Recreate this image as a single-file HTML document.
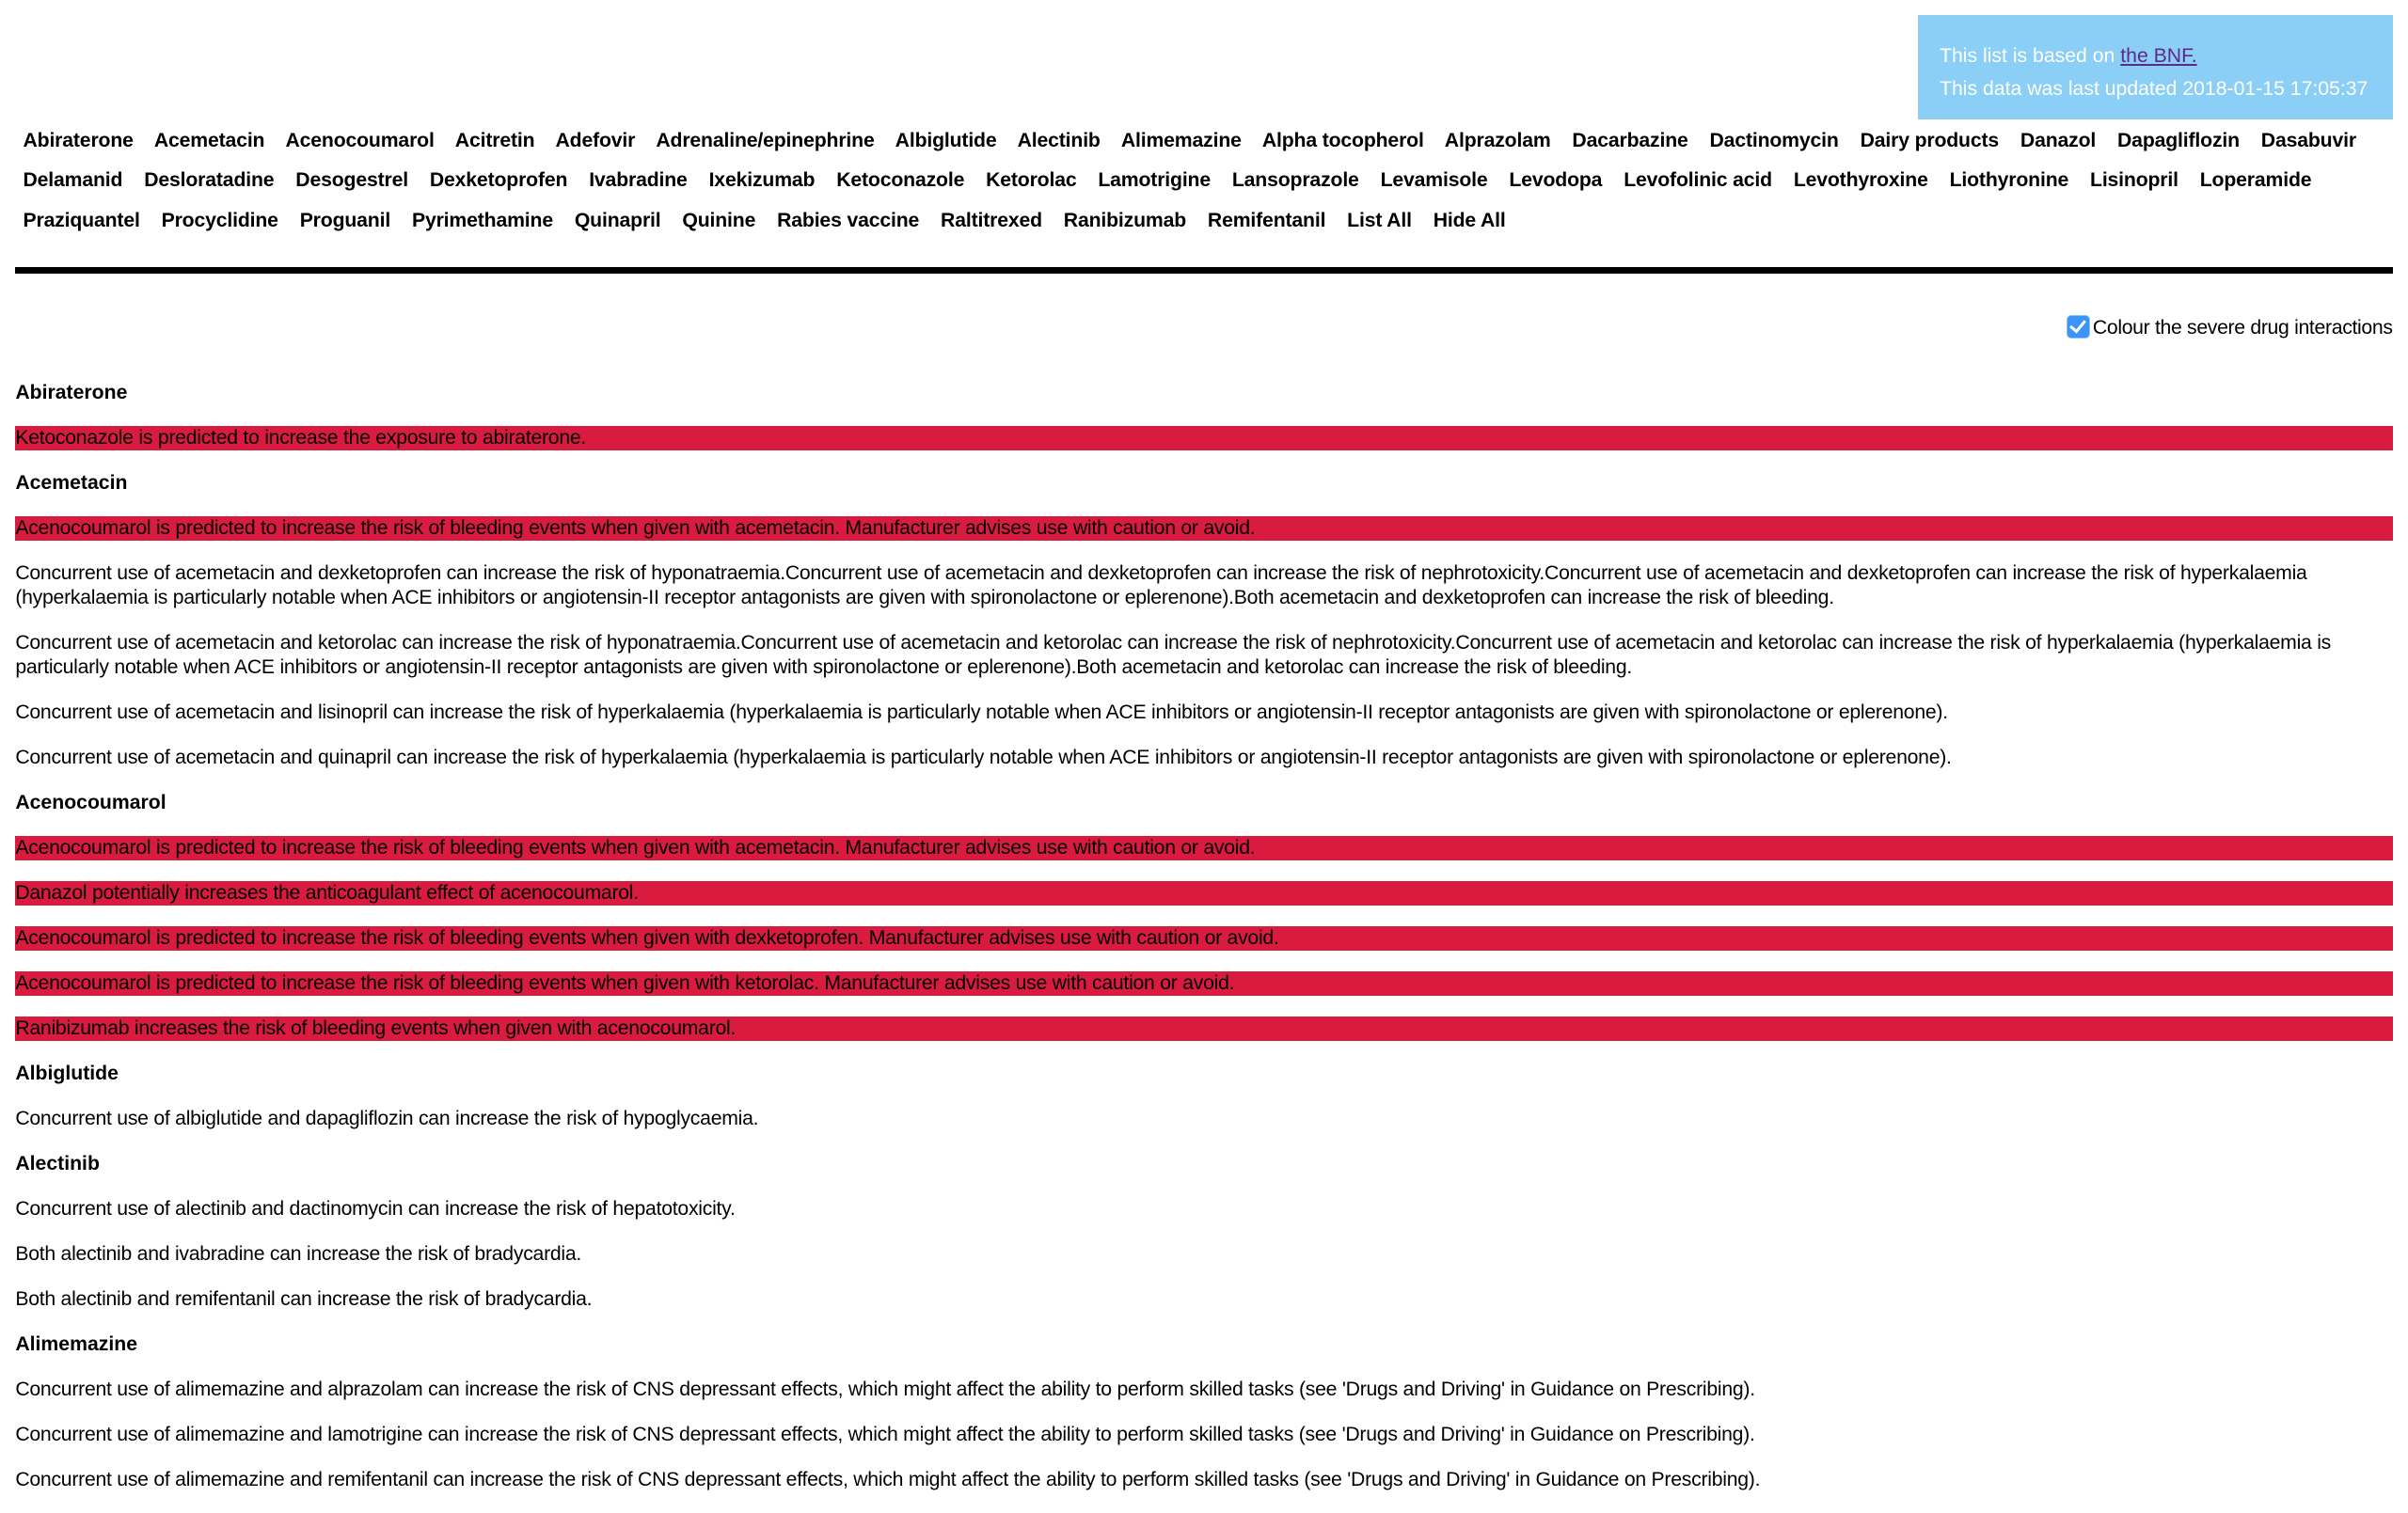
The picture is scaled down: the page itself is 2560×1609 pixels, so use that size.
<!DOCTYPE html>
<html><head><meta charset="utf-8">
<style>
html,body{margin:0;padding:0;background:#fff;}
body{width:1568px;height:980px;overflow:hidden;zoom:1.63265;font-family:"Liberation Sans",Arial,sans-serif;color:#000;position:relative;}
.box{position:absolute;left:1249px;top:10px;width:309px;height:68px;background:#8bcff7;color:#fff;font-size:13px;letter-spacing:0px;}
.box div{position:absolute;left:14px;white-space:nowrap;line-height:16px;}
.box a{color:#5b2a8e;text-decoration:underline;}
.nav{position:absolute;left:15px;top:79px;font-weight:bold;font-size:13px;line-height:26px;letter-spacing:-0.1px;}
.nav div{white-space:nowrap;word-spacing:0;}
.nav span{margin-right:10.5px;}
.bar{position:absolute;left:10px;top:174px;width:1548px;height:4px;background:#000;}
.chk{position:absolute;right:10px;top:205px;font-size:13px;line-height:16px;white-space:nowrap;letter-spacing:-0.2px;}
.cb{display:inline-block;width:14px;height:14px;background:#3d94f6;border:1px solid #8ec2fa;border-radius:3px;vertical-align:-3px;margin-right:2px;position:relative;}
.cb:after{content:"";position:absolute;left:4px;top:1px;width:4px;height:8px;border:solid #fff;border-width:0 2px 2px 0;transform:rotate(40deg);}
.main{position:absolute;left:10px;top:248px;width:1548px;font-size:13px;line-height:16px;}
.main p{margin:0 0 13.4px;white-space:nowrap;letter-spacing:-0.16px;}
.main h4{margin:0 0 13.4px;font-size:13px;font-weight:bold;letter-spacing:0px;}
.main p.r{background:#d91b3f;}
</style></head><body>
<div class="box">
<div style="top:19px">This list is based on <a>the BNF.</a></div>
<div style="top:40px">This data was last updated 2018-01-15 17:05:37</div>
</div>
<div class="nav">
<div><span>Abiraterone</span> <span>Acemetacin</span> <span>Acenocoumarol</span> <span>Acitretin</span> <span>Adefovir</span> <span>Adrenaline/epinephrine</span> <span>Albiglutide</span> <span>Alectinib</span> <span>Alimemazine</span> <span>Alpha tocopherol</span> <span>Alprazolam</span> <span>Dacarbazine</span> <span>Dactinomycin</span> <span>Dairy products</span> <span>Danazol</span> <span>Dapagliflozin</span> <span>Dasabuvir</span></div>
<div><span>Delamanid</span> <span>Desloratadine</span> <span>Desogestrel</span> <span>Dexketoprofen</span> <span>Ivabradine</span> <span>Ixekizumab</span> <span>Ketoconazole</span> <span>Ketorolac</span> <span>Lamotrigine</span> <span>Lansoprazole</span> <span>Levamisole</span> <span>Levodopa</span> <span>Levofolinic acid</span> <span>Levothyroxine</span> <span>Liothyronine</span> <span>Lisinopril</span> <span>Loperamide</span></div>
<div><span>Praziquantel</span> <span>Procyclidine</span> <span>Proguanil</span> <span>Pyrimethamine</span> <span>Quinapril</span> <span>Quinine</span> <span>Rabies vaccine</span> <span>Raltitrexed</span> <span>Ranibizumab</span> <span>Remifentanil</span> <span>List All</span> <span>Hide All</span></div>
</div>
<div class="bar"></div>
<div class="chk"><span class="cb"></span>Colour the severe drug interactions</div>
<div class="main">
<h4>Abiraterone</h4>
<p class="r">Ketoconazole is predicted to increase the exposure to abiraterone.</p>
<h4>Acemetacin</h4>
<p class="r">Acenocoumarol is predicted to increase the risk of bleeding events when given with acemetacin. Manufacturer advises use with caution or avoid.</p>
<p>Concurrent use of acemetacin and dexketoprofen can increase the risk of hyponatraemia.Concurrent use of acemetacin and dexketoprofen can increase the risk of nephrotoxicity.Concurrent use of acemetacin and dexketoprofen can increase the risk of hyperkalaemia<br>(hyperkalaemia is particularly notable when ACE inhibitors or angiotensin-II receptor antagonists are given with spironolactone or eplerenone).Both acemetacin and dexketoprofen can increase the risk of bleeding.</p>
<p>Concurrent use of acemetacin and ketorolac can increase the risk of hyponatraemia.Concurrent use of acemetacin and ketorolac can increase the risk of nephrotoxicity.Concurrent use of acemetacin and ketorolac can increase the risk of hyperkalaemia (hyperkalaemia is<br>particularly notable when ACE inhibitors or angiotensin-II receptor antagonists are given with spironolactone or eplerenone).Both acemetacin and ketorolac can increase the risk of bleeding.</p>
<p>Concurrent use of acemetacin and lisinopril can increase the risk of hyperkalaemia (hyperkalaemia is particularly notable when ACE inhibitors or angiotensin-II receptor antagonists are given with spironolactone or eplerenone).</p>
<p>Concurrent use of acemetacin and quinapril can increase the risk of hyperkalaemia (hyperkalaemia is particularly notable when ACE inhibitors or angiotensin-II receptor antagonists are given with spironolactone or eplerenone).</p>
<h4>Acenocoumarol</h4>
<p class="r">Acenocoumarol is predicted to increase the risk of bleeding events when given with acemetacin. Manufacturer advises use with caution or avoid.</p>
<p class="r">Danazol potentially increases the anticoagulant effect of acenocoumarol.</p>
<p class="r">Acenocoumarol is predicted to increase the risk of bleeding events when given with dexketoprofen. Manufacturer advises use with caution or avoid.</p>
<p class="r">Acenocoumarol is predicted to increase the risk of bleeding events when given with ketorolac. Manufacturer advises use with caution or avoid.</p>
<p class="r">Ranibizumab increases the risk of bleeding events when given with acenocoumarol.</p>
<h4>Albiglutide</h4>
<p>Concurrent use of albiglutide and dapagliflozin can increase the risk of hypoglycaemia.</p>
<h4>Alectinib</h4>
<p>Concurrent use of alectinib and dactinomycin can increase the risk of hepatotoxicity.</p>
<p>Both alectinib and ivabradine can increase the risk of bradycardia.</p>
<p>Both alectinib and remifentanil can increase the risk of bradycardia.</p>
<h4>Alimemazine</h4>
<p>Concurrent use of alimemazine and alprazolam can increase the risk of CNS depressant effects, which might affect the ability to perform skilled tasks (see 'Drugs and Driving' in Guidance on Prescribing).</p>
<p>Concurrent use of alimemazine and lamotrigine can increase the risk of CNS depressant effects, which might affect the ability to perform skilled tasks (see 'Drugs and Driving' in Guidance on Prescribing).</p>
<p>Concurrent use of alimemazine and remifentanil can increase the risk of CNS depressant effects, which might affect the ability to perform skilled tasks (see 'Drugs and Driving' in Guidance on Prescribing).</p>
</div>
</body></html>
